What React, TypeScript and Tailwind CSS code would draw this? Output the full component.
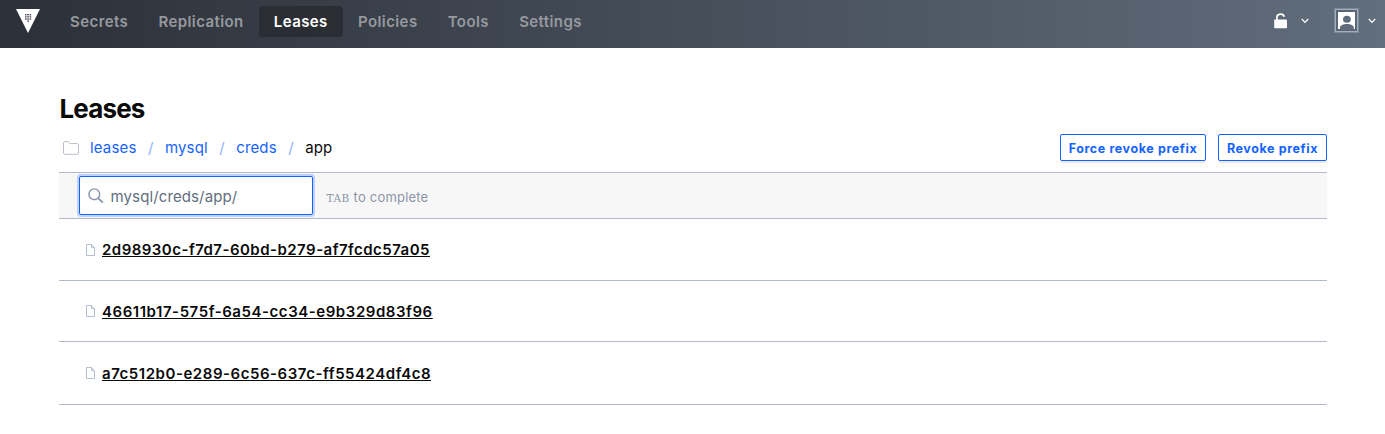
const navItems = ["Secrets", "Replication", "Leases", "Policies", "Tools", "Settings"];
const crumbs = ["leases", "mysql", "creds"];
const leases = [
  { id: "2d98930c-f7d7-60bd-b279-af7fcdc57a05", row: "h-[62px]", link: "tracking-[0.47px]" },
  { id: "46611b17-575f-6a54-cc34-e9b329d83f96", row: "h-[61px]", link: "tracking-[0.55px]" },
  { id: "a7c512b0-e289-6c56-637c-ff55424df4c8", row: "h-[63px]", link: "tracking-[0.54px]" },
];

function Logo() {
  return (
    <svg className="block" width="24" height="24" viewBox="0 0 24 24">
      <path d="M0 0h24L12 24z" fill="#fff" />
      <g fill="#4c5058">
        {[9, 11.3, 13.6].map((x) =>
          [5, 7.2, 9.4].map((y) => <rect key={`${x}-${y}`} x={x} y={y} width="1.6" height="1.4" />),
        )}
        <rect x="11.3" y="11.5" width="1.6" height="1.4" />
      </g>
    </svg>
  );
}

function Chevron() {
  return (
    <svg className="block" width="8" height="6" viewBox="0 0 8 6" fill="none" stroke="#fff" strokeWidth="1.2">
      <path d="M.8 1 4 4.3 7.2 1" />
    </svg>
  );
}

function Lock() {
  return (
    <svg className="block" width="14" height="16" viewBox="0 0 14 16">
      <path d="M2.9 7V4.6a3.7 3.4 0 0 1 7.3-.9" fill="none" stroke="#fff" strokeWidth="1.7" />
      <rect x="0.2" y="6.6" width="12.8" height="8.6" rx="0.8" fill="#fff" />
    </svg>
  );
}

function Avatar() {
  return (
    <svg className="block" width="25" height="25" viewBox="0 0 25 25">
      <rect x="0.5" y="0.5" width="24" height="24" fill="#6f7b8b" stroke="#7d899b" />
      <rect x="1.5" y="1.5" width="22" height="22" fill="#5c6776" stroke="#a4aebd" />
      <rect x="4" y="4" width="17" height="17" fill="#fff" />
      <ellipse cx="12.9" cy="11.2" rx="3.9" ry="3.5" fill="#5f6b7b" />
      <path d="M6 21v-1.6c0-2 3.4-3.3 6.9-3.3s6.9 1.3 6.9 3.3V21z" fill="#5f6b7b" />
    </svg>
  );
}

function Folder() {
  return (
    <svg className="block" width="16" height="14" viewBox="0 0 16 14" fill="none" stroke="#bac1cc">
      <path d="M.5 12.1V1.9C.5 1.1 1 .6 1.8.6h3.4l1.6 2h7.4c.8 0 1.3.5 1.3 1.2v8.3c0 .7-.5 1.2-1.3 1.2H1.8c-.8 0-1.3-.5-1.3-1.2z" />
    </svg>
  );
}

function Search() {
  return (
    <svg className="block" width="16" height="16" viewBox="0 0 16 16" fill="none" stroke="#8996a8">
      <circle cx="6.3" cy="6.3" r="5.4" strokeWidth="1.4" />
      <path d="m10.3 10.3 4.6 4.4" strokeWidth="1.8" />
    </svg>
  );
}

function File() {
  return (
    <svg className="block" width="9" height="12" viewBox="0 0 9 12" fill="none" stroke="#b6bfd0">
      <path d="M.5.5h5L8.5 3.6V11.5H.5zM5.5.5v3.1h3" />
    </svg>
  );
}

const button =
  "h-[27px] rounded-[2px] border border-[#1563ff] bg-white pt-px text-[12.5px] font-bold leading-[25px] tracking-[0.6px] text-[#1563ff] shadow-[0_2px_1px_rgba(0,0,0,0.09)] whitespace-nowrap";

export default function App() {
  return (
    <div className="min-h-[434px] bg-white font-['Inter',sans-serif] text-[#0a0a0a]">
      <header className="flex h-12 justify-between bg-linear-to-r from-[#2c3038] to-[#616e7d] pr-[9px] pl-4">
        <div className="flex">
          <div className="mt-[9px] mr-[15px]">
            <Logo />
          </div>
          <nav className="mt-1.5 flex">
            {navItems.map((item) => (
              <a
                key={item}
                className={`h-[31px] rounded-[4px] px-[15.1px] text-[15px] leading-[31px] font-semibold tracking-[0.41px] ${
                  item === "Leases" ? "bg-[#2a2d33] text-white" : "text-[#96999e]"
                }`}
              >
                {item}
              </a>
            ))}
          </nav>
        </div>
        <div className="flex h-[41px] items-center">
          <Lock />
          <div className="ml-[13px]">
            <Chevron />
          </div>
          <div className="ml-[25px]">
            <Avatar />
          </div>
          <div className="ml-[9px]">
            <Chevron />
          </div>
        </div>
      </header>
      <main className="mr-[58px] ml-[59px] pt-[43px]">
        <h1 className="h-[36px] pl-[0.5px] text-[26px] leading-[36px] font-bold tracking-[-0.85px]">Leases</h1>
        <div className="flex h-[45px] justify-between pt-[7px]">
          <nav className="flex h-[28px] items-center pl-1 text-[15px] tracking-[0.16px]">
            <Folder />
            <div className="flex pl-[11px]">
              {crumbs.map((c) => (
                <span key={c} className="flex text-[#1563ff]">
                  {c}
                  <span className="w-[28.4px] text-center text-[#8fb3ff]">/</span>
                </span>
              ))}
              <span>app</span>
            </div>
          </nav>
          <div className="flex gap-3">
            <button className={`w-[146px] ${button}`}>Force revoke prefix</button>
            <button className={`w-[109px] ${button}`}>Revoke prefix</button>
          </div>
        </div>
        <div className="flex h-[47px] items-center border-y border-[#b0bac9] bg-[#f7f7f7] pl-5">
          <div className="flex h-[39px] w-[234px] items-center rounded-[2px] border border-[#1563ff] bg-white pl-2 text-[15px] tracking-[0.12px] text-[#626e7d] shadow-[0_0_0_2px_#bfd1ff]">
            <Search />
            <span className="ml-[6.5px] pt-[3px]">mysql/creds/app/</span>
          </div>
          <div className="ml-[13.5px] pt-[5px] text-[13px] tracking-[0.2px] text-[#8b95a5]">
            <kbd className="font-['DejaVu_Serif',serif] text-[10.5px] tracking-[0.5px]">TAB</kbd> to complete
          </div>
        </div>
        {leases.map(({ id, row, link }) => (
          <div key={id} className={`flex items-center border-b border-[#b0bac9] pl-[27px] ${row}`}>
            <File />
            <a className={`ml-[7px] pt-0.5 text-[15px] font-semibold underline ${link}`}>{id}</a>
          </div>
        ))}
      </main>
    </div>
  );
}
